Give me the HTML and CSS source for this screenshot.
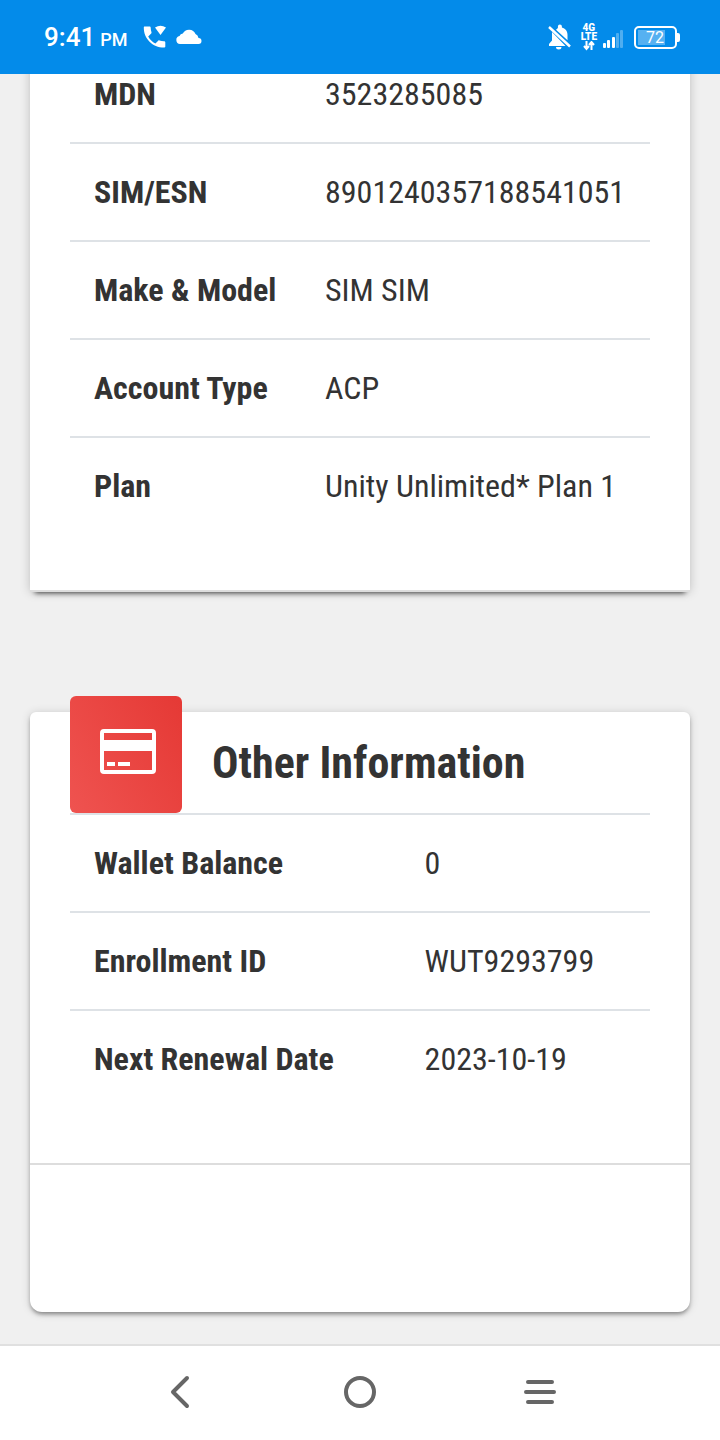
FILE: index.html
```html
<!DOCTYPE html>
<html lang="en">
<head>
<meta charset="utf-8">
<meta name="viewport" content="width=device-width, initial-scale=1">
<title>Account Information</title>
<link rel="stylesheet" href="styles.css">
</head>
<body>
<header class="status">
  <div class="status-group">
    <span class="clock">9:41<small class="meridiem">PM</small></span>
    <svg class="call-icon" width="24" height="24" viewBox="0 0 24 24" aria-hidden="true">
      <path d="M1.5 1.5h5c.7 0 1.200.5 1.200 1.200 0 1.600.3 3.200.8 4.600.1.4 0 .9-.3 1.200L5.200 11.500c1.700 3 4.100 5.500 7.200 7.100l2.800-2.900c.3-.3.8-.4 1.200-.3 1.500.5 3 .8 4.600.8.7 0 1.300.5 1.300 1.200v4c0 .7-.6 1.200-1.300 1.200C9.500 22.600.8 13.600.8 2.700c0-.7.300-1.200.7-1.200z" fill="#fff"/>
      <path d="M12 2.500Q17.500-1 23 2.500L17.500 10z" fill="#fff"/>
    </svg>
    <svg width="26" height="16" viewBox="0 0 26 16" aria-hidden="true">
      <path d="M4 15a4 4 0 0 1-.5-7.900 4 4 0 0 1 3.300-2.600A7 7 0 0 1 19.500 5 5.500 5.500 0 0 1 22.500 9a3 3 0 0 1 0 6z" fill="#fff"/>
    </svg>
  </div>
  <div class="status-group">
    <svg class="bell-icon" width="24" height="26" viewBox="0 0 24 26" aria-hidden="true">
      <path d="M4 8v8.500L1 20v2h16.500zM8 5.800 9.900 4V2.600a2 2 0 0 1 4 0v1c3.300.8 5.600 3.700 5.600 7.200v5.500z" fill="#fff"/>
      <path d="M8 23h5.500a2.750 2.500 0 0 1-5.500 0z" fill="#fff"/>
      <path d="M1 3 22 22.500" stroke="#fff" stroke-width="2.400"/>
    </svg>
    <span class="network">
      <span class="network-label">4G</span>
      <span class="network-label">LTE</span>
      <svg width="12" height="10" viewBox="0 0 12 10" aria-hidden="true">
        <path d="M3.500 0v8M1 5l2.500 3L6 5M8.500 9V1M6 4l2.500-3L11 4" fill="none" stroke="#fff" stroke-width="2"/>
      </svg>
    </span>
    <svg class="signal-icon" width="22" height="20" viewBox="0 0 22 20" aria-hidden="true">
      <g fill="#fff">
        <rect x="1" y="14" width="3" height="5" rx="1"/>
        <rect x="5" y="11" width="3" height="8" rx="1"/>
        <rect x="10" y="8" width="3" height="11" rx="1"/>
        <rect x="14" y="4" width="3" height="15" rx="1" opacity=".3"/>
        <rect x="18" y="1" width="3" height="18" rx="1" opacity=".3"/>
      </g>
    </svg>
    <span class="battery"><span class="battery-level">72</span></span>
  </div>
</header>

<main class="content">
  <section class="card card-device">
    <table class="details">
      <colgroup><col class="col-device"><col></colgroup>
      <tbody>
        <tr><th scope="row">MDN</th><td>3523285085</td></tr>
        <tr><th scope="row">SIM/ESN</th><td>8901240357188541051</td></tr>
        <tr><th scope="row">Make &amp; Model</th><td>SIM SIM</td></tr>
        <tr><th scope="row">Account Type</th><td>ACP</td></tr>
        <tr><th scope="row">Plan</th><td>Unity Unlimited* Plan 1</td></tr>
      </tbody>
    </table>
  </section>

  <section class="card card-other">
    <div class="card-header">
      <span class="badge">
        <svg width="56" height="45" viewBox="0 0 56 45" aria-hidden="true">
          <rect x="2" y="2" width="52" height="41" rx="2" fill="none" stroke="#fff" stroke-width="4"/>
          <path d="M3 11h50v11H3zM7 33h8v4H7zM18 33h12v4H18z" fill="#fff"/>
        </svg>
      </span>
      <h2 class="card-title">Other Information</h2>
    </div>
    <table class="details">
      <colgroup><col class="col-other"><col></colgroup>
      <tbody>
        <tr><th scope="row">Wallet Balance</th><td>0</td></tr>
        <tr><th scope="row">Enrollment ID</th><td>WUT9293799</td></tr>
        <tr><th scope="row">Next Renewal Date</th><td>2023-10-19</td></tr>
      </tbody>
    </table>
    <div class="card-footer"></div>
  </section>
</main>

<nav class="navbar" aria-label="System">
  <button class="nav-button" type="button" aria-label="Back">
    <svg width="36" height="36" viewBox="0 0 36 36" aria-hidden="true"><path d="M25 4 11 18l14 14" fill="none" stroke="#666" stroke-width="4" stroke-linecap="round" stroke-linejoin="round"/></svg>
  </button>
  <button class="nav-button" type="button" aria-label="Home">
    <svg width="36" height="36" viewBox="0 0 36 36" aria-hidden="true"><circle cx="18" cy="18" r="14" fill="none" stroke="#666" stroke-width="4"/></svg>
  </button>
  <button class="nav-button" type="button" aria-label="Recent apps">
    <svg width="36" height="36" viewBox="0 0 36 36" aria-hidden="true"><path d="M6 8h24M4 18h28M6 28h24" stroke="#666" stroke-width="4" stroke-linecap="round"/></svg>
  </button>
</nav>
</body>
</html>
```

FILE: styles.css
```css
* { box-sizing: border-box; }

body {
  margin: 0;
  min-height: 100vh;
  display: flex;
  flex-direction: column;
  background: #f0f0f0;
  color: #333;
  font-family: "Roboto Condensed", Roboto, sans-serif;
}

.status {
  position: relative;
  z-index: 1;
  display: flex;
  justify-content: space-between;
  align-items: center;
  height: 74px;
  padding: 0 43px 0 44px;
  background: #038bea;
  color: #fff;
  font-family: Roboto, sans-serif;
}

.status-group { display: flex; align-items: center; }
.clock { font-size: 26px; font-weight: 500; margin-right: 16px; }
.meridiem { margin-left: 5px; font-size: 18px; }
.call-icon { margin-right: 9px; }
.bell-icon { margin-right: 9px; }

.network {
  display: flex;
  flex-direction: column;
  align-items: center;
  margin-right: 5px;
}

.network-label {
  font-size: 10px;
  line-height: 9px;
  font-weight: 900;
}

.signal-icon { margin: 4px 10px 0 0; }

.battery {
  position: relative;
  width: 43px;
  height: 23px;
  padding: 2px;
  border: 2px solid #fff;
  border-radius: 5px;
}

.battery::after {
  content: "";
  position: absolute;
  top: 5px;
  right: -5px;
  width: 3px;
  height: 9px;
  border-radius: 0 2px 2px 0;
  background: #fff;
}

.battery-level {
  display: block;
  width: 27px;
  padding-left: 8px;
  background: rgba(255, 255, 255, .33);
  font-size: 16px;
  line-height: 15px;
}

.content { flex: 1; padding: 0 30px 32px; }

.card {
  background: #fff;
  padding: 0 40px;
  box-shadow: 0 2px 4px rgba(0, 0, 0, .35), 0 1px 10px rgba(0, 0, 0, .14);
}

.card-device {
  margin-top: -28px;
  padding-bottom: 56px;
  border-bottom: 2px solid #ddd;
  box-shadow: 0 6px 5px -5px rgba(0, 0, 0, .7), 0 0 10px rgba(0, 0, 0, .2);
}

.card-other {
  margin-top: 120px;
  border-radius: 6px 6px 12px 12px;
  box-shadow: 0 3px 4px -1px rgba(0, 0, 0, .4), 0 1px 10px rgba(0, 0, 0, .16);
}

.card-header {
  display: flex;
  height: 103px;
  border-bottom: 2px solid #dee2e6;
}

.badge {
  display: flex;
  justify-content: center;
  align-items: center;
  width: 112px;
  height: 117px;
  margin: -16px 30px 0 0;
  padding: 0 0 6px 4px;
  border-radius: 6px;
  background: linear-gradient(60deg, #ef5350, #e53935);
}

.card-title {
  align-self: center;
  margin: 0;
  font-size: 44px;
  line-height: 54px;
  font-weight: 700;
}

.details {
  width: 100%;
  border-collapse: separate;
  border-spacing: 0;
  table-layout: fixed;
  font-size: 32px;
  line-height: 48px;
}

.col-device { width: 231px; }
.col-other { width: 57%; }

.details th,
.details td {
  padding: 24px;
  border-bottom: 2px solid #dee2e6;
  text-align: left;
  font-weight: 400;
  white-space: nowrap;
}

.details th { font-weight: 700; }

.details tr:last-child th,
.details tr:last-child td { border-bottom: 0; }

.card-footer {
  height: 149px;
  margin: 56px -40px 0;
  border-top: 2px solid #ddd;
}

.navbar {
  display: flex;
  justify-content: space-between;
  height: 96px;
  padding: 0 90px 2px;
  border-top: 2px solid #e0e0e0;
  background: #fff;
}

.nav-button {
  flex: 1;
  display: flex;
  justify-content: center;
  align-items: center;
  padding: 0;
  border: 0;
  background: none;
}
```
